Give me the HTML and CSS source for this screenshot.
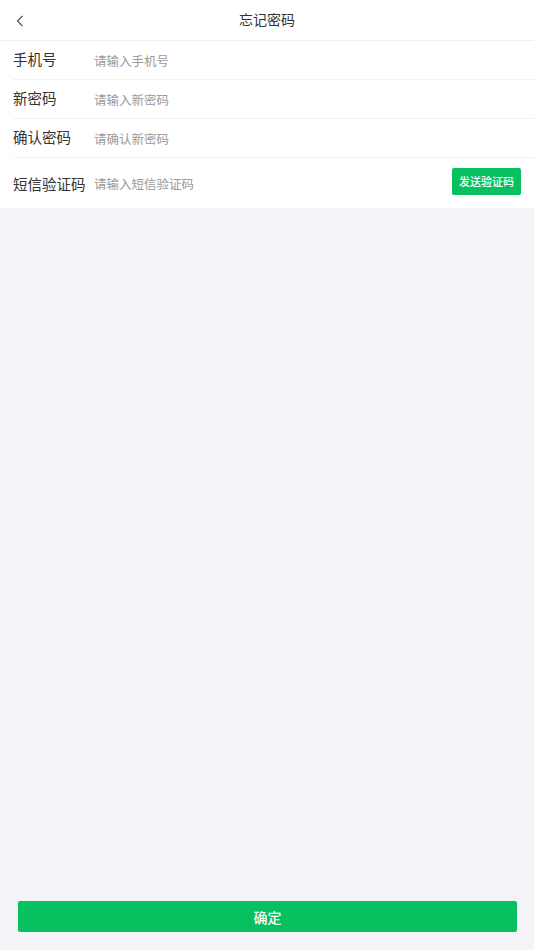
FILE: index.html
```html
<!DOCTYPE html>
<html lang="zh-CN">
<head>
    <meta charset="UTF-8">
    <meta name="viewport" content="width=device-width, initial-scale=1.0">
    <title>忘记密码</title>
    <link rel="stylesheet" href="styles.css">
</head>
<body>

<div class="page">
    <div class="nav-bar">
        <span class="nav-back">
            <svg width="8" height="12" viewBox="0 0 8 12"><path d="M6.5 0.8 L1.5 6 L6.5 11.2" fill="none" stroke="#444" stroke-width="1.1"/></svg>
        </span>
        <div class="nav-title">忘记密码</div>
    </div>

    <div class="form">
        <div class="form-row">
            <label class="form-label">手机号</label>
            <input class="form-input" type="text" placeholder="请输入手机号">
        </div>
        <div class="form-row">
            <label class="form-label">新密码</label>
            <input class="form-input" type="password" placeholder="请输入新密码">
        </div>
        <div class="form-row">
            <label class="form-label">确认密码</label>
            <input class="form-input" type="password" placeholder="请确认新密码">
        </div>
        <div class="form-row form-row-code">
            <label class="form-label">短信验证码</label>
            <input class="form-input" type="text" placeholder="请输入短信验证码">
            <button class="code-btn">发送验证码</button>
        </div>
    </div>

    <div class="spacer"></div>

    <div class="footer">
        <button class="submit-btn">确定</button>
    </div>
</div>

</body>
</html>
```

FILE: styles.css
```css
html, body {
    height: 100%;
}
body {
    margin: 0;
    background-color: #f3f3f8;
    font-family: "Noto Sans CJK SC", "Noto Sans", sans-serif;
    color: #333;
}
.page {
    display: flex;
    flex-direction: column;
    height: 950px;
}
.nav-bar {
    position: relative;
    height: 40px;
    background: #fff;
    border-bottom: 1px solid #f0f0f2;
    display: flex;
    align-items: center;
    justify-content: center;
}
.nav-back {
    position: absolute;
    left: 16px;
    top: 15px;
    display: flex;
}
.nav-title {
    font-size: 14px;
    color: #333;
    margin-top: -2px;
}
.form {
    background: #fff;
    padding-left: 13px;
}
.form-row {
    display: flex;
    align-items: center;
    height: 38px;
    border-bottom: 1px solid #f1f1f3;
}
.form-row > * {
    margin-top: -3px;
}
.form-row > .form-input {
    margin-top: 0;
}
.form-row-code {
    height: 50px;
    border-bottom: none;
    padding-right: 13px;
}
.form-row-code > * {
    margin-top: 1px;
}
.form-label {
    width: 81px;
    font-size: 14.5px;
    color: #333;
    flex-shrink: 0;
}
.form-input {
    flex: 1;
    min-width: 0;
    border: none;
    outline: none;
    padding: 0;
    font-family: inherit;
    font-size: 12.5px;
    background: transparent;
}
.form-input::placeholder {
    color: #9a9a9a;
}
.form-row-code .code-btn {
    background-color: #07c160;
    color: #fff;
    border: none;
    border-radius: 2px;
    height: 27px;
    width: 69px;
    padding: 0;
    font-family: inherit;
    font-size: 11px;
    font-weight: 500;
    margin-top: -4px;
}
.spacer {
    flex: 1;
}
.footer {
    padding: 0 17px 18px 18px;
}
.submit-btn {
    width: 100%;
    height: 31px;
    background-color: #07c160;
    color: #fff;
    border: none;
    border-radius: 2px;
    font-family: inherit;
    font-size: 14px;
    font-weight: 500;
    padding: 0;
}
```
